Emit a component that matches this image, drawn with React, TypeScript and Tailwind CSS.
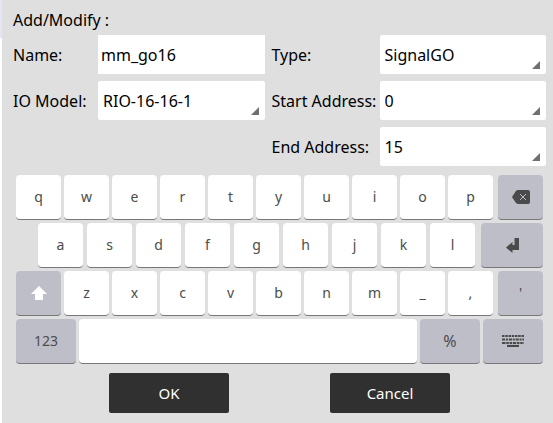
import React, { useState } from 'react';

const fieldClass = "block h-[39px] w-full appearance-none bg-white text-black outline-none";

type SelectFieldProps = {
  id: string;
  label: string;
  options: string[];
  labelClass?: string;
};

const SelectField = ({ id, label, options, labelClass = "pl-[7px]" }: SelectFieldProps) => (
  <>
    <label htmlFor={id} className={`whitespace-nowrap ${labelClass}`}>{label}</label>
    <div className="relative">
      <select id={id} className={`${fieldClass} rounded-xs pl-[5px] pr-5`}>
        {options.map((option) => (
          <option key={option}>{option}</option>
        ))}
      </select>
      <svg
        viewBox="0 0 8 8"
        className="pointer-events-none absolute bottom-[5px] right-[6px] h-2 w-2 fill-[#707070]"
        aria-hidden="true"
      >
        <path d="M8 0v8H0z" />
      </svg>
    </div>
  </>
);

type KeyProps = {
  children?: React.ReactNode;
  label?: string;
  special?: boolean;
  className?: string;
  onClick?: () => void;
};

const Key = ({ children, label, special, className = "flex-1", onClick }: KeyProps) => (
  <button
    type="button"
    aria-label={label}
    onClick={onClick}
    className={`flex h-[45px] min-w-0 items-center justify-center rounded-sm border-b border-[#77777b] text-[#4c4c4c] ${
      special ? "bg-[#bebec8]" : "bg-white"
    } ${className}`}
  >
    {children}
  </button>
);

const BackspaceIcon = () => (
  <svg viewBox="0 0 18 14" className="h-[14px] w-[18px]" aria-hidden="true">
    <path d="M6 0h10a2 2 0 0 1 2 2v10a2 2 0 0 1-2 2H6Q4.600 14 3.600 12.600L0 7l3.600-5.600Q4.600 0 6 0z" fill="#4a4a4a" />
    <path d="M8 4l6 6M14 4l-6 6" stroke="#bebec8" strokeWidth="1" />
  </svg>
);

const EnterIcon = () => (
  <svg viewBox="0 0 13 15" className="h-[15px] w-[13px]" aria-hidden="true">
    <path d="M8.500 0H13v12H6.500v3L0 9.500 6.500 4v3h2z" fill="#4a4a4a" />
  </svg>
);

const ShiftIcon = () => (
  <svg viewBox="0 0 16 14" className="h-[14px] w-4" aria-hidden="true">
    <path d="M8 0l8 8h-4v5a1 1 0 0 1-1 1H5a1 1 0 0 1-1-1V8H0z" fill="#fff" />
  </svg>
);

const KeyboardIcon = () => (
  <svg viewBox="0 0 22 12" className="h-3 w-[22px]" stroke="#4a4a4a" strokeWidth="2.200" aria-hidden="true">
    <path d="M0 1h22" strokeDasharray="2.500 .75" />
    <path d="M0 4.500h22" strokeDasharray="3.200 .8 2 .8" />
    <path d="M0 8h22" strokeDasharray="3.500 .75 2.500 .75 2.500 .75" />
    <path d="M5 11h12" />
  </svg>
);

const App = () => {
  const [name, setName] = useState("mm_go16");
  const type = (char: string) => setName((value) => value + char);

  const renderKeys = (chars: string) =>
    chars.split("").map((char) => (
      <Key key={char} onClick={() => type(char)}>{char}</Key>
    ));

  return (
    <div className="flex min-h-screen bg-white font-['Noto_Sans','Open_Sans',sans-serif] text-[16px] leading-5 text-black">
      <div className="w-[2px] shrink-0">
        <div className="h-[38px] bg-[#e4e4f4]" />
      </div>

      <main className="min-w-0 flex-1 bg-[#dfdfdf] pb-[10px] pl-[11px] pr-[7px] pt-[10px]">
        <h1>Add/Modify :</h1>

        <form
          onSubmit={(e) => e.preventDefault()}
          className="mt-[5px] grid grid-cols-[85px_1fr_115px_1fr] items-center gap-y-[7px]"
        >
          <label htmlFor="name">Name:</label>
          <input
            id="name"
            value={name}
            onChange={(e) => setName(e.target.value)}
            className={`${fieldClass} pl-[3px]`}
          />
          <SelectField id="type" label="Type:" options={["SignalGO"]} />

          <SelectField id="model" label="IO Model:" options={["RIO-16-16-1"]} labelClass="pl-0" />
          <SelectField id="start" label="Start Address:" options={["0"]} />

          <div className="col-span-2" />
          <SelectField id="end" label="End Address:" options={["15"]} />
        </form>

        <div className="mx-[3px] mt-[9px] flex flex-col gap-[3px] text-[14px]">
          <div className="flex gap-[3px]">
            {renderKeys("qwertyuiop")}
            <Key special label="Backspace" className="ml-[2px] flex-1" onClick={() => setName(name.slice(0, -1))}>
              <BackspaceIcon />
            </Key>
          </div>
          <div className="flex gap-1 pl-[22px]">
            {renderKeys("asdfghjkl")}
            <Key special label="Enter" className="ml-[2px] w-[62px]">
              <EnterIcon />
            </Key>
          </div>
          <div className="flex gap-[3px]">
            <Key special label="Shift">
              <ShiftIcon />
            </Key>
            {renderKeys("zxcvbnm_,")}
            <Key special className="ml-[2px] flex-1" onClick={() => type("'")}>'</Key>
          </div>
          <div className="flex gap-[3px]">
            <Key special className="w-[60px]">123</Key>
            <Key label="Space" onClick={() => type(" ")} />
            <Key special className="w-[60px] text-[16px]" onClick={() => type("%")}>%</Key>
            <Key special label="Hide keyboard" className="w-[60px]">
              <KeyboardIcon />
            </Key>
          </div>
        </div>

        <div className="mt-[9px] flex justify-center gap-[101px] text-[15px]">
          <button type="button" className="h-10 w-[120px] rounded-xs bg-[#303030] text-white">OK</button>
          <button type="button" className="h-10 w-[120px] rounded-xs bg-[#303030] text-white">Cancel</button>
        </div>
      </main>
    </div>
  );
};

export default App;
